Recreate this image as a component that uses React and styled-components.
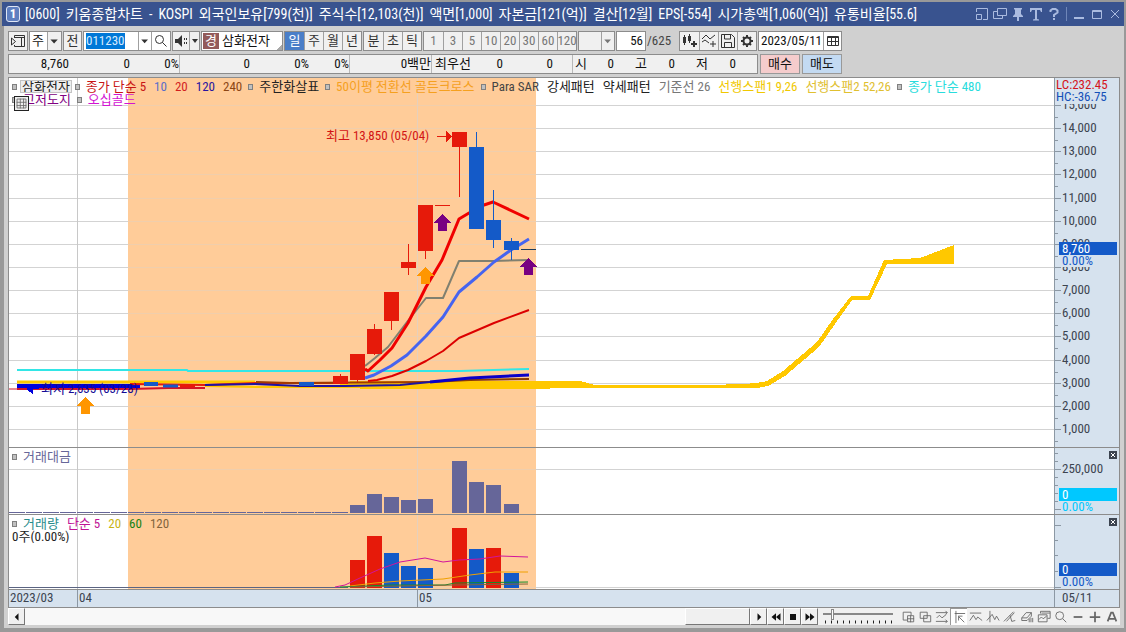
import React, { useEffect, useRef } from "react";
import styled, { createGlobalStyle } from "styled-components";

const GlobalStyle = createGlobalStyle`
  * {
    box-sizing: border-box;
  }
  body {
    margin: 0;
    font-family: "Liberation Sans Narrow", "Roboto Condensed", "Liberation Sans", "Noto Sans CJK KR", sans-serif;
    font-size: 13px;
    line-height: 16px;
    color: #111;
  }
  button, input, select {
    font: inherit;
    color: inherit;
    margin: 0;
    padding: 0;
    border: 0;
    border-radius: 0;
    background: none;
    appearance: none;
  }
`;

const Window = styled.div`
  display: flex;
  flex-direction: column;
  min-height: 100vh;
  background: #d0d0d0;
  border-style: solid;
  border-color: #999;
  border-width: 2px 2px 4px 4px;
`;

const TitleBar = styled.header`
  display: flex;
  align-items: center;
  height: 24px;
  margin-left: -2px;
  padding-left: 4px;
  background: #39538f;
  color: #fff;
`;

const TitleBadge = styled.span`
  width: 14px;
  height: 16px;
  margin-right: 5px;
  border: 1px solid #dfe6f5;
  border-radius: 3px;
  background: #5f7fc0;
  font-weight: bold;
  line-height: 14px;
  text-align: center;
`;

const Title = styled.h1`
  display: flex;
  flex: 1;
  gap: 6px;
  margin: 0;
  font-size: 14px;
  font-weight: normal;
  white-space: nowrap;
  overflow: hidden;
`;

const TitleButton = styled.button`
  display: flex;
  align-items: center;
  justify-content: center;
  width: 18px;
  height: 20px;
  color: #aabbe0;
`;

const Divider = styled.span`
  width: 1px;
  height: 14px;
  margin: 0 3px;
  background: #6f86b8;
`;

const Toolbar = styled.div`
  display: flex;
  align-items: center;
  gap: 1px;
  padding: 5px 4px 3px;
`;

const Group = styled.div`
  display: flex;
  height: 20px;
  border: 1px solid #8c8c8c;
  background: ${(p) => (p.$white ? "#fff" : "#f0f0f0")};

  > * + * {
    border-left: 1px solid #a0a0a0;
  }
`;

const ToolButton = styled.button`
  display: flex;
  align-items: center;
  justify-content: center;
  width: ${(p) => p.$width || 19}px;
  color: ${(p) => (p.$muted ? "#777" : "#333")};
  ${(p) => p.$active && "background: #4a7ec8; color: #fff;"}
`;

const Field = styled.input`
  width: ${(p) => p.$width}px;
  padding: 0 2px;
  background: #fff;
  text-align: ${(p) => p.$align || "left"};
  outline: none;

  &::selection {
    background: #0078d7;
    color: #d8ecff;
  }
`;

const Select = styled.select`
  width: ${(p) => p.$width}px;
  padding-left: 2px;
  background: ${(p) => (p.disabled ? "#efefef" : "#fff")};
`;

const StockName = styled.span`
  display: flex;
  align-items: center;
  width: 80px;
  background: linear-gradient(135deg, #fff 94%, #aaa 94%);

  b {
    width: 16px;
    height: 16px;
    margin: 0 3px 0 1px;
    background: #935a5a;
    color: #fff;
    font-weight: normal;
    text-align: center;
  }
`;

const Total = styled.span`
  width: 31px;
  color: #444;
`;

const QuoteRow = styled.div`
  display: flex;
  gap: 2px;
  padding: 0 4px 3px;
`;

const Quotes = styled.div`
  display: flex;
  height: 20px;
  border: 1px solid #8c8c8c;
  background: #f0f0f0;
  line-height: 18px;
`;

const Quote = styled.span`
  width: ${(p) => p.$width}px;
  text-align: right;
  white-space: nowrap;
  ${(p) => p.$end && "border-right: 1px solid #b8b8b8;"}
`;

const OrderButton = styled.button`
  width: 40px;
  height: 20px;
  border: 1px solid #999;
  background: ${(p) => (p.$sell ? "#c3daf2" : "#f5cccc")};
`;

const Chart = styled.main`
  margin: 0 4px;
  border: 1px solid #8c8c8c;
  background: #fff;
`;

const Panel = styled.section`
  position: relative;
  display: grid;
  grid-template-columns: minmax(0, 1fr) 65px;
  grid-template-rows: minmax(0, 1fr);
  height: ${(p) => p.$height}px;
  border-bottom: 1px solid #8c8c8c;
  overflow: hidden;

  svg {
    display: block;
    width: 100%;
    height: 100%;
    overflow: hidden;
  }
`;

const Axis = styled.div`
  position: relative;
  border-left: 1px solid #8c98a4;
  background: #d6e2ee;
`;

const AxisTag = styled.div`
  position: absolute;
  top: ${(p) => p.$top}px;
  left: 4px;
  right: 2px;
  padding-left: 3px;
  height: 13px;
  background: ${(p) => p.$color};
  color: #fff;
  line-height: 13px;

  span {
    display: block;
    height: 12px;
    line-height: 12px;
    background: #d6e2ee;
    color: ${(p) => p.$color};
  }
`;

const AxisNote = styled.div`
  position: absolute;
  top: 1px;
  left: 0;
  right: 0;
  height: 25px;
  padding-left: 1px;
  background: #d6e2ee;
  color: #d4141c;
  line-height: 12px;

  span {
    display: block;
    color: #1450b8;
  }
`;

const CloseButton = styled.button`
  position: absolute;
  top: 3px;
  right: 2px;
  width: 8px;
  height: 8px;
  background: #3c4450;
  color: #fff;
`;

const Legend = styled.div`
  position: absolute;
  top: 2px;
  left: 3px;
  right: 66px;
  display: flex;
  flex-wrap: wrap;
  column-gap: 6px;
  line-height: 13px;
  white-space: nowrap;
  overflow: hidden;
`;

const LegendItem = styled.span`
  color: ${(p) => p.$color || "#222"};
  ${(p) =>
    p.$boxed &&
    "margin: 0 -3px 0 -3px; padding: 0 2px; background: #eee; outline: 1px solid #c4c4c4; outline-offset: -1px;"}

  & + & {
    margin-left: 2px;
  }
`;

const Bullet = styled.i`
  width: 5px;
  height: 6px;
  margin: 4px 0 0;
  border: 1px solid #808080;
  background: #c0c0c0;
`;

const Break = styled.span`
  flex-basis: 100%;
`;

const GridToggle = styled.button`
  position: absolute;
  top: 18px;
  left: 5px;
  width: 15px;
  height: 15px;
  border: 1px solid #222;
  background: #eee;
  color: #666;
`;

const DateRow = styled.div`
  display: grid;
  grid-template-columns: 68px 340px minmax(0, 1fr) 65px;
  height: 17px;
  background: #d6e2ee;
  color: #3c4450;

  span {
    padding-left: 1px;
  }
  span + span {
    border-left: 1px solid #8c98a4;
  }
  span:last-child {
    padding-left: 7px;
  }
`;

const BottomBar = styled.footer`
  display: flex;
  align-items: stretch;
  height: 17px;
  margin: 0 4px;
  background: #f0f0f0;
`;

const ScrollTrack = styled.div`
  display: flex;
  flex: 1;
  justify-content: space-between;
  background: #f8f8f8;
`;

const Raised = styled.button`
  display: flex;
  align-items: center;
  justify-content: center;
  width: ${(p) => p.$width || 17}px;
  border: 1px solid;
  border-color: #fff #777 #777 #fff;
  background: #f0f0f0;
`;

const Zoom = styled.label`
  display: flex;
  flex-direction: column;
  width: 70px;
  margin: 0 6px 0 5px;

  input {
    width: 100%;
    height: 12px;
    background: linear-gradient(#888, #888) 0 5px / 100% 2px no-repeat;
  }
  input::-webkit-slider-thumb {
    appearance: none;
    width: 3px;
    height: 11px;
    border: 1px solid #888;
    background: #fff;
  }
  svg {
    display: block;
  }
`;

const BottomTool = styled.button`
  display: flex;
  align-items: center;
  justify-content: center;
  width: 17px;
  color: #666;
  ${(p) => p.$active && "background: #fff; box-shadow: inset 1px 1px #999;"}
`;

function Icon({ d, fill, size = 16, width = 1 }) {
  return (
    <svg width={size} height={size} viewBox="0 0 16 16" aria-hidden="true">
      <path
        d={d}
        fill={fill ? "currentColor" : "none"}
        stroke={fill ? "none" : "currentColor"}
        strokeWidth={width}
      />
    </svg>
  );
}

const ARROW = "M3 6h9l-4.500 5z";

const titleFields = [
  "[0600]",
  "키움종합차트",
  "-",
  "KOSPI",
  "외국인보유[799(천)]",
  "주식수[12,103(천)]",
  "액면[1,000]",
  "자본금[121(억)]",
  "결산[12월]",
  "EPS[-554]",
  "시가총액[1,060(억)]",
  "유통비율[55.6]",
];

const titleButtons = [
  { label: "도킹", d: "M2.5 6V2.5h11v11H9M2.5 8.5h5v5h-5z" },
  { label: "복제", d: "M5.5 2.5h9v7h-9zM5 5.5H1.5v7h9V10" },
  { label: "고정", d: "M4 2h8v1l-1 1v4l2 2v1H9v4H7v-4H3v-1l2-2V4L4 3z", fill: true },
  { label: "글꼴", d: "M2 2h12v4h-1l-1-2H9v9l2 .5v1H5v-1L7 13V4H4L3 6H2z", fill: true },
  { label: "도움말", d: "M4.5 6V4.5l2-1.500h3l2 1.500v2L8 9v2M8 12v2", width: 2 },
];

const windowButtons = [
  { label: "최소화", d: "M3 12h10", width: 2 },
  { label: "최대화", d: "M3.5 4.5h9v8h-9zM3 5.5h10" },
  { label: "닫기", d: "M4 4l8 8M12 4l-8 8" },
];

const quotes = [
  { text: "8,760", width: 60 },
  { text: "0", width: 61 },
  { text: "0%", width: 50, end: true },
  { text: "0", width: 70 },
  { text: "0%", width: 59 },
  { text: "0%", width: 41, end: true },
  { text: "0백만", width: 82, end: true },
  { text: "최우선", width: 39 },
  { text: "0", width: 32 },
  { text: "0", width: 50 },
  { text: "", width: 20, end: true },
  { text: "시", width: 14 },
  { text: "0", width: 27 },
  { text: "고", width: 33 },
  { text: "0", width: 28 },
  { text: "저", width: 33 },
  { text: "0", width: 28 },
  { text: "", width: 21 },
];

const priceLegend = [
  { bullet: true },
  { text: "삼화전자", boxed: true },
  { bullet: true },
  { text: "종가 단순 5", color: "#c81414" },
  { text: "10", color: "#5a6ec8" },
  { text: "20", color: "#d21e1e" },
  { text: "120", color: "#2814a0" },
  { text: "240", color: "#8c4614" },
  { bullet: true },
  { text: "주한화살표" },
  { bullet: true },
  { text: "50이평 전환선 골든크로스", color: "#f5a01e" },
  { bullet: true },
  { text: "Para SAR", color: "#444" },
  { text: "강세패턴" },
  { text: "약세패턴" },
  { text: "기준선 26", color: "#777" },
  { text: "선행스팬1 9,26", color: "#f0c800" },
  { text: "선행스팬2 52,26", color: "#e0c030" },
  { bullet: true },
  { text: "종가 단순 480", color: "#28dcdc" },
  { br: true },
  { bullet: true },
  { text: "고저도지", color: "#820082" },
  { bullet: true },
  { text: "오십골드", color: "#d214d2" },
];

const volumeLegend = [
  { bullet: true },
  { text: "거래량", color: "#288c8c" },
  { text: "단순 5", color: "#c01496" },
  { text: "20", color: "#c8b414" },
  { text: "60", color: "#148214" },
  { text: "120", color: "#82643c" },
  { br: true },
  { text: "0주(0.00%)" },
];

const gridY = [105, 128, 151, 174, 198, 221, 244, 267, 290, 313, 336, 360, 383, 406, 429];

const RED = "#e61a0a";
const BLUE = "#145ac8";

// x, body top, body bottom, wick top, wick bottom
const candles = [
  [333, 376, 384, 374, 384, RED],
  [350, 354, 380, 354, 382, RED],
  [367, 329, 354, 324, 355, RED],
  [384, 292, 321, 292, 330, RED],
  [401, 262, 268, 244, 275, RED],
  [418, 205, 251, 205, 259, RED],
  [435, 205, 206, 205, 206, RED],
  [452, 132, 147, 132, 197, RED],
  [469, 147, 229, 132, 229, BLUE],
  [486, 220, 240, 190, 248, BLUE],
  [504, 241, 250, 238, 260, BLUE],
  [521, 249, 250, 249, 250, "#1e3c5a"],
];

const amounts = [
  [350, 505], [367, 494], [384, 497], [401, 500], [418, 499],
  [452, 461], [469, 482], [486, 485], [504, 504],
];

const volumes = [
  [350, 560, RED], [367, 536, RED], [384, 553, BLUE], [401, 566, BLUE], [418, 568, BLUE],
  [452, 528, RED], [469, 549, BLUE], [486, 548, RED], [504, 573, BLUE],
];

const markers = [
  [85, 397, "#ff9600"],
  [425, 267, "#ff9600"],
  [442, 214, "#780082"],
  [528, 258, "#780082"],
];

function LegendRow({ items }) {
  return (
    <Legend>
      {items.map((item, i) => {
        if (item.br) return <Break key={i} />;
        if (item.bullet) return <Bullet key={i} />;
        return (
          <LegendItem key={i} $color={item.color} $boxed={item.boxed}>
            {item.text}
          </LegendItem>
        );
      })}
    </Legend>
  );
}

// Plots are drawn in window coordinates, shifted to the panel's own top
function Plot({ top, lines, children }) {
  return (
    <svg shapeRendering="crispEdges">
      <g transform={`translate(-9 ${-top})`}>
        <rect x="128" y={top} width="408" height="400" fill="#ffcc99" />
        {lines.map((y) => (
          <rect key={y} x="9" y={y} width="100%" height="1" fill="#d3d3d3" />
        ))}
        {lines.map((y) => (
          <rect key={y} x="128" y={y} width="408" height="1" fill="#f0ceac" />
        ))}
        <rect x="77" y={top} width="1" height="400" fill="#c8c8c8" />
        <rect x="417" y={top} width="1" height="400" fill="#e6d0bc" />
        {children}
      </g>
    </svg>
  );
}

function Line({ points, color, width = 1 }) {
  return (
    <polyline
      points={points}
      fill="none"
      stroke={color}
      strokeWidth={width}
      strokeLinejoin="round"
      shapeRendering="auto"
    />
  );
}

function PricePlot() {
  return (
    <Plot top={78} lines={gridY}>
      <polygon
        fill="#ffc800"
        points="340,382 360,381 580,381 595,385 710,385 742,384 757,383 767,381 783,371 817,342 833,319 851,296 868,296 884,260 920,258 954,245 954,264 887,264 870,300 852,300 835,324 819,347 785,376 768,386 757,388 595,388 560,388 540,389 380,389 340,388"
      />
      <Line points="17,382 130,382 255,382" color="#ffc800" width={3} />
      <Line points="205,386 255,387 350,387" color="#ffc800" width={2} />
      <Line points="17,370 187,370 188,371 460,371 529,369" color="#32e6e6" width={2} />
      <Line points="9,389 17,389" color="#d21428" />
      <Line points="17,389 130,389 168,388 205,388" color="#d21428" width={2} />
      <Line points="17,386 100,386 140,386" color="#0000dc" width={4} />
      <Line points="130,384 205,385 256,383 345,383" color={RED} width={2} />
      <Line points="256,382 290,383 430,382" color="#a03c00" width={2} />
      <Line points="144,384 158,384" color={BLUE} width={4} />
      <Line points="163,386 178,386" color={BLUE} width={3} />
      <Line points="180,386 195,386" color={RED} width={3} />
      <Line points="205,385 255,384 300,386 345,386 400,385 430,382" color="#1e14a0" width={2} />
      <Line points="299,384 314,384" color={BLUE} width={4} />
      <Line points="430,382 470,380 529,379" color="#8c3c00" width={2} />
      <Line points="430,382 470,378 529,375" color="#0a00c8" width={3} />
      <Line points="365,366 375,358 388,347 407,322 426,298 443,298 459,261 493,261 529,260" color="#808070" width={2} />
      <Line points="365,369 368,371 380,360 392,348 408,323 426,287 442,260 459,219 469,213 484,205 493,202 529,219" color="#f00000" width={3} />
      <Line points="365,378 374,375 391,366 407,355 426,336 443,317 459,292 477,277 494,262 511,250 529,239" color="#4664f0" width={3} />
      <Line points="368,381 377,380 392,376 408,370 426,361 443,351 459,338 494,323 529,310" color="#dc0000" width={2} />
      {candles.map(([x, y1, y2, w1, w2, color]) => (
        <g key={x} fill={color}>
          <rect x={x} y={y1} width="15" height={y2 - y1} />
          <rect x={x + 7} y={w1} width="1" height={w2 - w1} />
        </g>
      ))}
      {markers.map(([x, y, color]) => (
        <path key={x} d={`M${x} ${y}l9 9h-4v8h-9v-8h-5z`} fill={color} />
      ))}
      <text x="326" y="140" fill="#d21414">최고 13,850 (05/04)</text>
      <path d="M437 136h9v-5l6 5l-6 6v-5h-9z" fill={RED} />
      <path d="M26 389l7-5v4h6v1h-6v5z" fill="#0000dc" />
      <text x="41" y="393" fill="#140a96">최저 2,635 (03/28)</text>
    </Plot>
  );
}

function PriceAxis() {
  return (
    <svg fill="#3c4450">
      {gridY.map((y, i) => (
        <g key={y}>
          <rect y={y - 78} width="6" height="1" fill="#8c98a4" />
          <rect y={y - 66} width="3" height="1" fill="#8c98a4" />
          <text x="7" y={y - 74}>
            {`${15 - i},000`}
          </text>
        </g>
      ))}
    </svg>
  );
}

const bottomTools = [
  { label: "추가", d: "M7 11.5H2.5v-9h9V6M7.500 6.500h7v7h-7zM7 10h8M11 6v8" },
  { label: "겹치기", d: "M2.5 2.5h8v7h-8zM6.500 6.500h8v7h-8z" },
  { label: "범위", d: "M1 3h13M1 13h13M2 9l3-3 3 3 5-4M12 1l2 2-2 2M12 11l2 2-2 2" },
  { label: "커서", d: "M3 4h12M4.500 1v14M7 7h5M7.500 7v5M8 8l6 6", active: true },
  { label: "수평", d: "M1 3.500h13M1 12l4-6 3 5 2-3 5 4" },
  { label: "수직", d: "M4.500 1v13M1 12l6-7 3 6 2-4 3 5" },
  { label: "추세", d: "M1 13L12 2M4 13L13 3M8 6l2 7 4-1" },
  { label: "지우개", d: "M2 9l5-6h6v4l-5 5H2zM2 9h6l5-6M10.500 10v4M12.500 9v5M14.500 9v5" },
  { label: "저장", d: "M4 4V1.500h11v8h-3M1.500 5.500h10v8h-10zM2 11l3-3 2 2 4-3M5 3.500h10" },
  { label: "돋보기", d: "M11 6.500a4.500 4.500 0 1 1-9 0a4.500 4.500 0 1 1 9 0M10 10l4 4" },
  { label: "축소", d: "M3 8h10", width: 2 },
  { label: "확대", d: "M2 8h12M8 2v12", width: 2 },
  { label: "자동", d: "M3 13L7 3h2l4 10M4.500 10h7", width: 2 },
];

function TopToolbar() {
  const code = useRef(null);

  useEffect(() => {
    code.current.focus();
    code.current.select();
  }, []);

  return (
    <Toolbar>
      <Group>
        <ToolButton $width={18} aria-label="메뉴">
          <Icon d="M4.500 5V2.500h10v11h-10V12M4 4.500h11M11.500 5v8M1.500 5l4 3.500-4 3.500z" />
        </ToolButton>
      </Group>
      <Group>
        <Select $width={17} aria-label="시장" defaultValue="주">
          <option>주</option>
        </Select>
        <ToolButton $width={14} aria-label="시장 목록"><Icon d={ARROW} fill /></ToolButton>
      </Group>
      <Group>
        <ToolButton $width={17}>전</ToolButton>
      </Group>
      <Group $white>
        <Field ref={code} $width={54} aria-label="종목코드" defaultValue="011230" />
        <ToolButton $width={13} aria-label="최근 종목"><Icon d={ARROW} fill /></ToolButton>
        <ToolButton aria-label="검색">
          <Icon d="M10.500 6.500a4 4 0 1 1-8 0a4 4 0 1 1 8 0M9.500 9.500l4 4" />
        </ToolButton>
      </Group>
      <Group>
        <ToolButton $width={16} aria-label="소리">
          <Icon d="M2 6h3l4-4v12l-4-4H2zM11 5h1v2h-1zM11 9h1v2h-1zM13 5h1v2h-1zM13 9h1v2h-1z" fill />
        </ToolButton>
        <ToolButton $width={10} aria-label="소리 목록">
          <svg width="6" height="4"><path d="M0 0h6L3 4z" fill="currentColor" /></svg>
        </ToolButton>
      </Group>
      <Group>
        <StockName><b>경</b>삼화전자</StockName>
      </Group>
      <Group>
        {["일", "주", "월", "년"].map((t, i) => (
          <ToolButton key={t} $active={i === 0}>{t}</ToolButton>
        ))}
      </Group>
      <Group>
        {["분", "초", "틱"].map((t) => (
          <ToolButton key={t}>{t}</ToolButton>
        ))}
      </Group>
      <Group>
        {["1", "3", "5", "10", "20", "30", "60", "120"].map((t) => (
          <ToolButton key={t} $muted>{t}</ToolButton>
        ))}
      </Group>
      <Group>
        <Select $width={22} aria-label="주기" disabled />
        <ToolButton $width={13} $muted aria-label="주기 목록"><Icon d={ARROW} fill /></ToolButton>
      </Group>
      <Group $white>
        <Field $width={28} $align="right" aria-label="봉 개수" defaultValue="56" />
      </Group>
      <Total>/625</Total>
      <Group>
        <ToolButton aria-label="봉 추가">
          <Icon d="M1 4h3v6H1zM2 2h1v10H2zM6 3h3v5H6zM7 1h1v9H7zM11 8h2v2h2v2h-2v2h-2v-2H9v-2h2z" fill />
        </ToolButton>
        <ToolButton aria-label="지표 추가">
          <Icon d="M1 6l4-4 4 4 5-4M12 8v6M9 11h6M1 9l3-2 4 3" />
        </ToolButton>
        <ToolButton aria-label="저장">
          <Icon d="M1.500 1.500h10l3 3v10h-13zM4.500 2v4h6V2M4.500 14V9.500h7V14" />
        </ToolButton>
        <ToolButton aria-label="설정">
          <Icon d="M8 4.500a3.500 3.500 0 1 1 0 7a3.500 3.500 0 1 1 0-7M8 2v2M8 12v2M2 8h2M12 8h2M4 4l1 1M11 11l1 1M12 4l-1 1M5 11l-1 1" width={2} />
        </ToolButton>
      </Group>
      <Group $white>
        <Field $width={64} aria-label="날짜" defaultValue="2023/05/11" />
        <ToolButton $width={18} aria-label="달력">
          <Icon d="M2.500 3.500h11v9h-11zM2 4.500h12M2 8.500h12M6.500 5v8M10.500 5v8" />
        </ToolButton>
      </Group>
    </Toolbar>
  );
}

function App() {
  return (
    <>
      <GlobalStyle />
      <Window>
        <TitleBar>
          <TitleBadge>1</TitleBadge>
          <Title>
            {titleFields.map((t) => (
              <span key={t}>{t}</span>
            ))}
          </Title>
          {titleButtons.map(({ label, ...icon }) => (
            <TitleButton key={label} aria-label={label}><Icon {...icon} /></TitleButton>
          ))}
          <Divider />
          {windowButtons.map(({ label, ...icon }) => (
            <TitleButton key={label} aria-label={label}><Icon {...icon} /></TitleButton>
          ))}
        </TitleBar>

        <TopToolbar />

        <QuoteRow>
          <Quotes>
            {quotes.map((q, i) => (
              <Quote key={i} $width={q.width} $end={q.end}>{q.text}</Quote>
            ))}
          </Quotes>
          <OrderButton>매수</OrderButton>
          <OrderButton $sell>매도</OrderButton>
        </QuoteRow>

        <Chart>
          <Panel $height={370}>
            <PricePlot />
            <Axis>
              <PriceAxis />
              <AxisNote>LC:232.45<span>HC:-36.75</span></AxisNote>
              <AxisTag $top={164} $color={BLUE}>8,760<span>0.00%</span></AxisTag>
            </Axis>
            <LegendRow items={priceLegend} />
            <GridToggle aria-label="표 보기">
              <Icon size={13} d="M2.500 2.500h11v11h-11zM2 6.500h12M2 10.500h12M6.500 2v12M10.500 2v12" />
            </GridToggle>
          </Panel>

          <Panel $height={67}>
            <Plot top={448} lines={[469]}>
              <path d="M9 512.500H348" stroke="#666699" strokeDasharray="16 1" />
              {amounts.map(([x, y]) => (
                <rect key={x} x={x} y={y} width="15" height={513 - y} fill="#666699" />
              ))}
            </Plot>
            <Axis>
              <svg fill="#3c4450">
                <path d="M0 5.500h3M0 13.500h3M0 21.500h6M0 29.500h3M0 37.500h3M0 45.500h3M0 53.500h3M0 61.500h6" stroke="#8c98a4" />
                <text x="7" y="25">250,000</text>
              </svg>
              <AxisTag $top={40} $color="#00c8ff">0<span>0.00%</span></AxisTag>
              <CloseButton aria-label="닫기"><Icon size={8} d="M4 4l8 8M12 4l-8 8" width={2} /></CloseButton>
            </Axis>
            <LegendRow items={[{ bullet: true }, { text: "거래대금", color: "#666699" }]} />
          </Panel>

          <Panel $height={75}>
            <Plot top={515} lines={[587]}>
              <rect x="9" y="587" width="339" height="1" fill="#5a6482" />
              {volumes.map(([x, y, color]) => (
                <rect key={x} x={x} y={y} width="15" height={588 - y} fill={color} />
              ))}
              <Line points="335,587 345,585 360,578 380,569 400,562 425,558 443,562 459,560 480,559 500,556 528,557" color="#d2149b" />
              <Line points="350,586 375,583 400,581 443,579 470,575 495,572 528,572" color="#f0a000" />
              <Line points="340,587 390,585 445,585 455,583 528,582" color="#148c28" />
              <Line points="350,587 400,586 455,585 528,584" color="#82643c" />
            </Plot>
            <Axis>
              <svg>
                <path d="M0 10.500h6M0 25.500h3M0 40.500h3M0 56.500h3M0 72.500h6" stroke="#8c98a4" />
              </svg>
              <AxisTag $top={48} $color={BLUE}>0<span>0.00%</span></AxisTag>
              <CloseButton aria-label="닫기"><Icon size={8} d="M4 4l8 8M12 4l-8 8" width={2} /></CloseButton>
            </Axis>
            <LegendRow items={volumeLegend} />
          </Panel>

          <DateRow>
            <span>2023/03</span>
            <span>04</span>
            <span>05</span>
            <span>05/11</span>
          </DateRow>
        </Chart>

        <BottomBar>
          <ScrollTrack>
            <Raised aria-label="왼쪽"><Icon size={12} d="M10 3v10L5 8z" fill /></Raised>
            <Raised $width={65} aria-label="스크롤 위치" />
          </ScrollTrack>
          <Raised aria-label="오른쪽"><Icon size={12} d="M6 3v10l5-5z" fill /></Raised>
          <Raised aria-label="뒤로"><Icon size={12} d="M8 3v10L2 8zM14 3v10L8 8z" fill /></Raised>
          <Raised aria-label="정지"><Icon size={12} d="M4 4h8v8H4z" fill /></Raised>
          <Raised aria-label="앞으로"><Icon size={12} d="M2 3v10l6-5zM8 3v10l6-5z" fill /></Raised>
          <Zoom>
            <input type="range" aria-label="배율" defaultValue="12" />
            <svg width="70" height="4"><path d="M2 2H70" stroke="#222" strokeWidth="3" strokeDasharray="1 5" /></svg>
          </Zoom>
          {bottomTools.map(({ label, active, ...icon }) => (
            <BottomTool key={label} $active={active} aria-label={label}><Icon size={14} {...icon} /></BottomTool>
          ))}
        </BottomBar>
      </Window>
    </>
  );
}

export default App;
